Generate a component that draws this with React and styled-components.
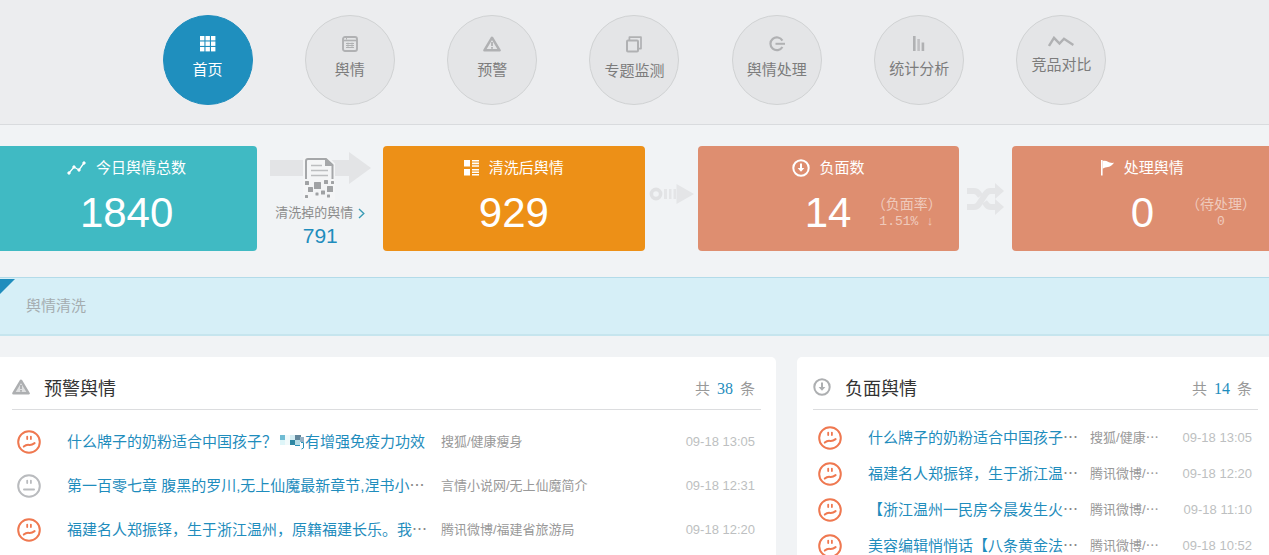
import React from "react"
import styled, { createGlobalStyle } from "styled-components";

const GlobalStyle = createGlobalStyle`
    * {
        box-sizing: border-box;
    }

    body {
        margin: 0;
        background: #f1f3f5;
        color: #888;
        font-family: "Liberation Sans", "Noto Sans CJK SC", sans-serif;
        font-size: 15px;
    }

    a {
        color: inherit;
        text-decoration: none;
    }
`

const Page = styled.div`
    overflow-x: clip;
`

const Header = styled.header`
    padding: 15px 16px 19px;
    background: #ecedef;
    border-bottom: 1px solid #d9dbde;
`

const Nav = styled.nav`
    display: flex;
    justify-content: space-between;
    max-width: 944px;
    margin: 0 auto;
`

const NavItem = styled.a`
    display: flex;
    flex-direction: column;
    align-items: center;
    gap: 7px;
    width: 90px;
    height: 90px;
    padding-top: 20px;
    border: 1px solid ${(props) => (props.$active ? '#1f8dbd' : '#d0d2d3')};
    border-radius: 50%;
    background: ${(props) => (props.$active ? '#1f8fbe' : '#e4e5e7')};
    color: ${(props) => (props.$active ? '#fff' : '#7c7c7c')};
    line-height: 22px;
    white-space: nowrap;

    svg {
        display: block;
        flex: none;
        color: ${(props) => (props.$active ? '#fff' : '#b0b1b3')};
    }
`

const Stats = styled.section`
    display: grid;
    grid-template-columns: 1fr 126px 1fr 53px 1fr 53px 1fr;
    margin: 21px -4px 26px;
`

const StatCard = styled.div`
    display: flex;
    flex-direction: column;
    gap: 8px;
    height: 105px;
    padding-top: 10px;
    border-radius: 4px;
    background: ${(props) => props.$color};
    color: #fff;
`

const StatTitle = styled.div`
    display: flex;
    align-items: center;
    justify-content: center;
    gap: 10px;
    line-height: 24px;
`

const StatBody = styled.div`
    display: grid;
    grid-template-columns: repeat(3, minmax(0, 1fr));
    align-items: center;
    height: 50px;
`

const StatNumber = styled.div`
    grid-column: 2;
    display: flex;
    justify-content: center;
    font-size: 42px;
    line-height: 50px;
`

const StatNote = styled.div`
    justify-self: start;
    color: rgba(255, 255, 255, 0.55);
    font-size: 14px;
    line-height: 17px;
    text-align: center;
    white-space: nowrap;
`

const NoteValue = styled.div`
    font-family: "Liberation Mono", "Noto Sans CJK SC", monospace;
    font-size: 13px;
    white-space: pre;
`

const Cleaned = styled.a`
    display: flex;
    flex-direction: column;
    align-items: center;
    padding-top: 5px;
`

const CleanedLabel = styled.span`
    display: flex;
    align-items: center;
    gap: 5px;
    color: #8c8c8c;
    font-size: 13px;
    line-height: 20px;
    white-space: nowrap;
`

const CleanedNumber = styled.span`
    color: #1f8dbd;
    font-size: 21px;
    line-height: 26px;
`

const Connector = styled.div`
    display: flex;
    align-items: center;
    justify-content: center;
    padding-bottom: ${(props) => props.$lift || 0}px;
`

const Banner = styled.section`
    display: flex;
    align-items: flex-start;
    height: 59px;
    padding-top: 1px;
    border-top: 1px solid #b3dbe9;
    border-bottom: 2px solid #c6e5ee;
    background: #d6eff7;
    color: #a5adb0;
    line-height: 54px;
`

const Corner = styled.span`
    width: 15px;
    height: 15px;
    margin-right: 11px;
    background: #1f8dbd;
    clip-path: polygon(0 0, 100% 0, 0 100%);
`

const Panels = styled.main`
    display: grid;
    grid-template-columns: 59fr 36fr;
    gap: 21px;
    margin: 21px -4px 0;
`

const Panel = styled.section`
    min-width: 0;
    padding: 8px 15px 16px 16px;
    border-radius: 5px;
    background: #fff;
`

const PanelHeader = styled.div`
    display: flex;
    align-items: center;
    height: 45px;
    padding-right: 6px;
    border-bottom: 1px solid #dcdddf;

    svg {
        color: #adafb1;
    }
`

const PanelTitle = styled.h2`
    flex: 1;
    margin: 0 0 0 14px;
    color: #333;
    font-size: 18px;
    font-weight: 400;
`

const Count = styled.span`
    color: #999;

    b {
        margin: 0 7px;
        color: #1f8dbd;
        font-family: "Liberation Serif", serif;
        font-size: 16px;
        font-weight: 400;
    }
`

const List = styled.table`
    width: 100%;
    margin-top: 10px;
    border-collapse: collapse;
    table-layout: fixed;

    td {
        height: ${(props) => props.$rowHeight}px;
        padding: 0;
        line-height: 24px;
        white-space: nowrap;
    }
`

const FaceCell = styled.td`
    width: 55px;

    svg {
        display: block;
        margin-left: 5px;
    }
`

const TitleCell = styled.td`
    width: ${(props) => props.$width}px;
    color: #888;

    a {
        color: #1f8dbd;
    }
`

const SourceCell = styled.td`
    color: #999;
    font-size: 13px;
`

const DateCell = styled.td`
    width: 76px;
    color: #bdbfc1;
    font-size: 13px;
    text-align: right;

    time {
        margin-right: 6px;
    }
`

const Mosaic = styled.svg`
    margin: 0 1px 0 2px;
    vertical-align: -3px;
`

const GridIcon = () => (
    <svg width="16" height="16" viewBox="0 0 16 16" fill="currentColor">
        {[0, 5.5, 11].map((y) => [0, 5.5, 11].map((x) => (
            <rect key={`${x}-${y}`} x={x} y={y} width="4.4" height="4.4" />
        )))}
    </svg>
);

const WindowIcon = () => (
    <svg width="16" height="16" viewBox="0 0 16 16" fill="none" stroke="currentColor">
        <rect x="1" y="1" width="14" height="14" rx="2" strokeWidth="1.9" />
        <path d="M1 4.5h14" strokeWidth="1.6" />
        <path d="M4.5 1v2.5M4 7.500h8M4 9.500h8M4 11.500h8" strokeWidth="1" />
        <path d="M6 6.5v5.5M10 6.5v5.5" strokeWidth="0.7" />
    </svg>
);

const WarningIcon = ({ filled }) => (
    <svg width="18" height="16" viewBox="0 0 18 16" fill="none" stroke="currentColor">
        <path
            d="M9 1.7 16.6 14.3H1.4Z"
            strokeWidth="2.5"
            strokeLinejoin="round"
            fill={filled ? '#dfe0e1' : 'none'}
        />
        <path d="M9 6v4M9 11v1.800" strokeWidth="1.8" />
    </svg>
);

const LayersIcon = () => (
    <svg width="16" height="17" viewBox="0 0 16 17" fill="none" stroke="currentColor" strokeLinejoin="round">
        <rect x="1" y="4.5" width="11" height="11" rx="1" strokeWidth="2" />
        <path d="M3.4 4V1.2h11.6v11.4h-2.6" strokeWidth="1.7" />
    </svg>
);

const ProcessIcon = () => (
    <svg width="16" height="16" viewBox="0 0 16 16" fill="none" stroke="currentColor">
        <path d="M13.4 4.6A6.4 6.4 0 1 0 13.4 11" strokeWidth="2.2" />
        <path d="M6.5 7.8H16" strokeWidth="2" />
    </svg>
);

const BarsIcon = () => (
    <svg width="12" height="15" viewBox="0 0 12 15" fill="currentColor">
        <rect x="0" y="0" width="2.6" height="15" />
        <rect x="4.3" y="3" width="2.6" height="12" opacity="0.7" />
        <rect x="8.6" y="6.5" width="2.6" height="8.5" />
    </svg>
);

const CompareIcon = () => (
    <svg width="26" height="11" viewBox="0 0 26 11" fill="none" stroke="currentColor" strokeWidth="2.4">
        <path d="M1 10 6 1.8 11.5 7.6 16 2.8 25.4 9" />
    </svg>
);

const TrendIcon = () => (
    <svg width="19" height="14" viewBox="0 0 19 14" fill="#fff" stroke="#fff">
        <path d="M2 12 7 6 12 9 17 2" fill="none" strokeWidth="1.3" />
        <circle cx="2" cy="12" r="1.2" />
        <circle cx="7" cy="6" r="1.2" />
        <circle cx="12" cy="9" r="1.2" />
        <circle cx="17" cy="2" r="1.2" />
    </svg>
);

const ListIcon = () => (
    <svg width="15" height="16" viewBox="0 0 15 16" fill="#fff">
        <rect x="0" y="0" width="6" height="6.5" />
        <rect x="0" y="9" width="6" height="6.5" />
        <path d="M8 0h7v1.6H8zM8 2.6h7v1.6H8zM8 5.2h7v1.6H8zM8 9h7v1.6H8zM8 11.5h7v1.6H8zM8 14h7v1.6H8z" />
    </svg>
);

const DownIcon = () => (
    <svg width="18" height="18" viewBox="0 0 18 18" fill="none" stroke="currentColor">
        <circle cx="9" cy="9" r="7.7" strokeWidth="2" />
        <path d="M9 4.5v6" strokeWidth="2" />
        <path d="M5.6 9h6.8L9 12.8z" fill="currentColor" stroke="none" />
    </svg>
);

const FlagIcon = () => (
    <svg width="13" height="16" viewBox="0 0 13 16" fill="#fff">
        <path d="M0 0h1.6v15.5H0z" />
        <path d="M1.6 1C3.500 .4 5.500 .6 7 1.800C8.500 2.900 10.500 3 13 2.800C11.500 5 9.500 6.800 7 7C5 7.200 3.500 7.600 1.600 8.800z" />
    </svg>
);

const CleanIcon = () => (
    <svg width="101" height="52" viewBox="0 0 101 52">
        <path d="M0 9h79V1l22 16-22 16v-8H0z" fill="#e3e4e6" />
        <path d="M33 5.500h25l7 7V49H33z" fill="#f4f5f6" />
        <path d="M36 28V10q0-2 2-2H56L62.500 14v14" fill="none" stroke="#a5a7a9" strokeWidth="2" />
        <path d="M55 7v8h8.500z" fill="#a5a7a9" />
        <path d="M41 14.500h11M41 19.500h17M41 24.500h17" stroke="#bcbec0" strokeWidth="1.4" />
        <g fill="#a0a2a4">
            <rect x="35" y="30" width="4" height="4" rx=".5" />
            <rect x="44" y="31" width="7" height="7" rx=".5" />
            <rect x="54" y="29" width="4" height="4" rx=".5" />
            <rect x="61" y="30" width="3" height="3" rx=".5" />
            <rect x="38" y="36" width="5" height="5" rx=".5" />
            <rect x="57" y="35" width="6" height="6" rx=".5" />
            <rect x="51" y="39.500" width="4" height="4" rx=".5" />
            <rect x="45.500" y="41.500" width="3" height="3" rx=".5" />
            <rect x="35" y="44" width="3" height="3" rx=".5" />
            <rect x="57" y="43.500" width="3" height="3" rx=".5" />
        </g>
    </svg>
);

const ChevronIcon = () => (
    <svg width="7" height="11" viewBox="0 0 7 11" fill="none" stroke="#3a9bb5" strokeWidth="1.4">
        <path d="M1 1 5.800 5.500 1 10" />
    </svg>
);

const FlowIcon = () => (
    <svg width="45" height="20" viewBox="0 0 45 20">
        <circle cx="7" cy="10" r="4.600" fill="none" stroke="#e0e1e3" strokeWidth="3.6" />
        <path d="M15 5h3v10h-3zM20 5h2.500v10H20zM24.500 5H27v10h-2.500z" fill="#e4e5e7" />
        <path d="M27.500 0 45 10 27.500 20z" fill="#e4e5e7" />
    </svg>
);

const ShuffleIcon = () => (
    <svg width="37" height="32" viewBox="0 0 37 32">
        <g fill="none" stroke="#e4e5e7" strokeWidth="6">
            <path d="M0 8h7q3 0 5 3l1.500 2" />
            <path d="M0 24h7q3 0 5-3l6.500-10q2-3 5-3h5" />
            <path d="M17.500 19l1.500 2q2 3 5 3h5" />
        </g>
        <path d="M28 0l9 8-9 8zM28 16l9 8-9 8z" fill="#e4e5e7" />
    </svg>
);

const Face = ({ mood }) => (
    <svg
        width="24"
        height="24"
        viewBox="0 0 24 24"
        fill="none"
        stroke={mood === 'bad' ? '#ef7850' : '#b9bbbe'}
        strokeLinecap="round"
        role="img"
        aria-label={mood === 'bad' ? '负面' : '中性'}
    >
        <circle cx="12" cy="12" r="10.800" strokeWidth="2" />
        <path d="M10.200 6.600v2.500M13.900 6.600v2.500" strokeWidth="1.800" />
        {mood === 'bad'
            ? <path d="M6.800 16.600C8.600 15 10.200 14.500 12.200 14.900C14.200 15.100 16 14.300 17.600 13.100" strokeWidth="2" />
            : <path d="M7 15.500h10" strokeWidth="2" />}
    </svg>
);

// blurred-out brand name inside a headline
const HiddenWord = () => (
    <Mosaic width="25" height="16" viewBox="0 0 25 16">
        <rect x="1" y="1" width="5" height="5" fill="#6fbbd3" />
        <rect x="1" y="6" width="5" height="5" fill="#def5f8" />
        <rect x="6" y="1" width="5" height="10" fill="#f1fafb" />
        <rect x="11" y="6" width="5" height="5" fill="#2f87a3" />
        <rect x="11" y="1" width="5" height="5" fill="#d4edf3" />
        <rect x="16" y="1" width="6" height="5" fill="#61869b" />
        <rect x="16" y="6" width="5" height="5" fill="#b4dbe5" />
        <rect x="21" y="3" width="4" height="5" fill="#95b3c7" />
        <path d="M16 11.500h5M22 8.500h2.500v5.500l-2 1" fill="none" stroke="#2b92b8" />
    </Mosaic>
);

const navItems = [
    { label: '首页', icon: <GridIcon />, active: true },
    { label: '舆情', icon: <WindowIcon /> },
    { label: '预警', icon: <WarningIcon /> },
    { label: '专题监测', icon: <LayersIcon /> },
    { label: '舆情处理', icon: <ProcessIcon /> },
    { label: '统计分析', icon: <BarsIcon /> },
    { label: '竞品对比', icon: <CompareIcon /> },
];

const warnings = [
    { mood: 'bad', title: <>什么牌子的奶粉适合中国孩子？<HiddenWord />有增强免疫力功效</>, source: '搜狐/健康瘦身', date: '09-18 13:05' },
    { mood: 'neutral', title: '第一百零七章 腹黑的罗川,无上仙魔最新章节,涅书小', cut: true, source: '言情小说网/无上仙魔简介', date: '09-18 12:31' },
    { mood: 'bad', title: '福建名人郑振铎，生于浙江温州，原籍福建长乐。我', cut: true, source: '腾讯微博/福建省旅游局', date: '09-18 12:20' },
];

const negatives = [
    { mood: 'bad', title: '什么牌子的奶粉适合中国孩子', cut: true, source: '搜狐/健康⋯', date: '09-18 13:05' },
    { mood: 'bad', title: '福建名人郑振铎，生于浙江温', cut: true, source: '腾讯微博/⋯', date: '09-18 12:20' },
    { mood: 'bad', title: '【浙江温州一民房今晨发生火', cut: true, source: '腾讯微博/⋯', date: '09-18 11:10' },
    { mood: 'bad', title: '美容编辑悄悄话【八条黄金法', cut: true, source: '腾讯微博/⋯', date: '09-18 10:52' },
];

const Stat = ({ color, icon, title, value, note, noteValue }) => (
    <StatCard $color={color}>
        <StatTitle>{icon}{title}</StatTitle>
        <StatBody>
            <StatNumber>{value}</StatNumber>
            {note && (
                <StatNote>
                    {note}
                    <NoteValue>{noteValue}</NoteValue>
                </StatNote>
            )}
        </StatBody>
    </StatCard>
);

const NewsPanel = ({ icon, title, count, rows, rowHeight, titleWidth }) => (
    <Panel>
        <PanelHeader>
            {icon}
            <PanelTitle>{title}</PanelTitle>
            <Count>共<b>{count}</b>条</Count>
        </PanelHeader>
        <List $rowHeight={rowHeight}>
            <tbody>
                {rows.map((row) => (
                    <tr key={row.date}>
                        <FaceCell><Face mood={row.mood} /></FaceCell>
                        <TitleCell $width={titleWidth}>
                            <a href="#news">{row.title}</a>{row.cut && '⋯'}
                        </TitleCell>
                        <SourceCell>{row.source}</SourceCell>
                        <DateCell><time>{row.date}</time></DateCell>
                    </tr>
                ))}
            </tbody>
        </List>
    </Panel>
);

const App = () => {
    return (
        <Page lang="zh-CN">
            <GlobalStyle />
            <Header>
                <Nav>
                    {navItems.map((item) => (
                        <NavItem key={item.label} href="#nav" $active={item.active}>
                            {item.icon}
                            {item.label}
                        </NavItem>
                    ))}
                </Nav>
            </Header>
            <Stats>
                <Stat color="#40bac3" icon={<TrendIcon />} title="今日舆情总数" value="1840" />
                <Cleaned href="#cleaned">
                    <CleanIcon />
                    <CleanedLabel>清洗掉的舆情<ChevronIcon /></CleanedLabel>
                    <CleanedNumber>791</CleanedNumber>
                </Cleaned>
                <Stat color="#ed9017" icon={<ListIcon />} title="清洗后舆情" value="929" />
                <Connector $lift={10}><FlowIcon /></Connector>
                <Stat color="#de8e70" icon={<DownIcon />} title="负面数" value="14" note="（负面率）" noteValue="1.51% ↓" />
                <Connector><ShuffleIcon /></Connector>
                <Stat color="#de8e70" icon={<FlagIcon />} title="处理舆情" value="0" note="（待处理）" noteValue="0" />
            </Stats>
            <Banner>
                <Corner />
                舆情清洗
            </Banner>
            <Panels>
                <NewsPanel
                    icon={<WarningIcon filled />}
                    title="预警舆情"
                    count={38}
                    rows={warnings}
                    rowHeight={44}
                    titleWidth={374}
                />
                <NewsPanel
                    icon={<DownIcon />}
                    title="负面舆情"
                    count={14}
                    rows={negatives}
                    rowHeight={36}
                    titleWidth={222}
                />
            </Panels>
        </Page>
    )
};

export default App;
